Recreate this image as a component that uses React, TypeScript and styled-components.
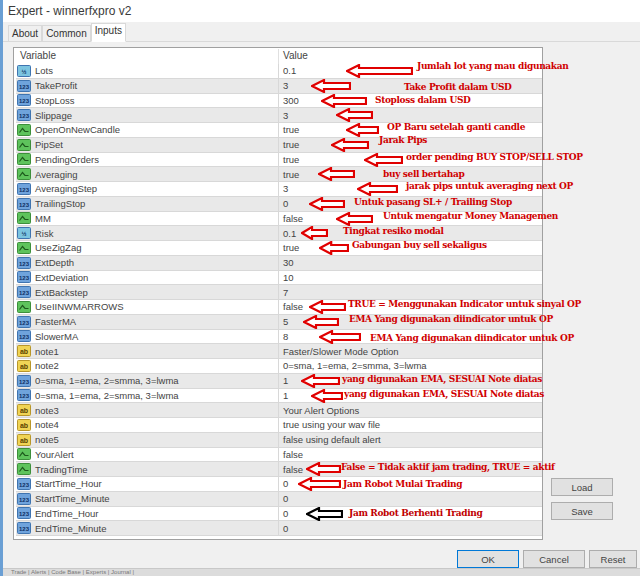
import React from 'react';
import styled, { createGlobalStyle } from 'styled-components';

const GlobalStyle = createGlobalStyle`
  html, body { margin: 0; padding: 0; background: #f0f0f0; }
  body { font-family: "Liberation Sans", Arial, sans-serif; }
`;

const ROW_H = 14.75;

type Kind = 'int' | 'dbl' | 'bool' | 'str';

const rows: [Kind, string, string][] = [
  ['dbl', 'Lots', '0.1'],
  ['int', 'TakeProfit', '3'],
  ['int', 'StopLoss', '300'],
  ['int', 'Slippage', '3'],
  ['bool', 'OpenOnNewCandle', 'true'],
  ['bool', 'PipSet', 'true'],
  ['bool', 'PendingOrders', 'true'],
  ['bool', 'Averaging', 'true'],
  ['int', 'AveragingStep', '3'],
  ['int', 'TrailingStop', '0'],
  ['bool', 'MM', 'false'],
  ['dbl', 'Risk', '0.1'],
  ['bool', 'UseZigZag', 'true'],
  ['int', 'ExtDepth', '30'],
  ['int', 'ExtDeviation', '10'],
  ['int', 'ExtBackstep', '7'],
  ['bool', 'UseIINWMARROWS', 'false'],
  ['int', 'FasterMA', '5'],
  ['int', 'SlowerMA', '8'],
  ['str', 'note1', 'Faster/Slower Mode Option'],
  ['str', 'note2', '0=sma, 1=ema, 2=smma, 3=lwma'],
  ['int', '0=sma, 1=ema, 2=smma, 3=lwma', '1'],
  ['int', '0=sma, 1=ema, 2=smma, 3=lwma', '1'],
  ['str', 'note3', 'Your Alert Options'],
  ['str', 'note4', 'true using your wav file'],
  ['str', 'note5', 'false using default alert'],
  ['bool', 'YourAlert', 'false'],
  ['bool', 'TradingTime', 'false'],
  ['int', 'StartTime_Hour', '0'],
  ['int', 'StartTime_Minute', '0'],
  ['int', 'EndTime_Hour', '0'],
  ['int', 'EndTime_Minute', '0'],
];

// row index, arrow left, arrow right, text left, text dy, text, colour
const notes: [number, number, number, number, number, string, string?][] = [
  [0, 345, 410, 416, -3, 'Jumlah lot yang mau digunakan'],
  [1, 310, 348, 403, 3, 'Take Profit dalam USD'],
  [2, 320, 364, 374, 1, 'Stoploss dalam USD'],
  [3, 335, 370, 0, 0, ''],
  [4, 345, 376, 386, -1, 'OP Baru setelah ganti candle'],
  [5, 330, 366, 378, -3, 'Jarak Pips'],
  [6, 363, 400, 405, -1, 'order pending BUY STOP/SELL STOP'],
  [7, 317, 352, 382, 2, 'buy sell bertahap'],
  [8, 356, 395, 405, -1, 'jarak pips untuk averaging next OP'],
  [9, 308, 342, 353, 0, 'Untuk pasang SL+ / Trailing Stop'],
  [10, 335, 370, 382, -1, 'Untuk mengatur Money Managemen'],
  [11, 300, 325, 342, 0, 'Tingkat resiko modal'],
  [12, 318, 346, 351, -1, 'Gabungan buy sell sekaligus'],
  [16, 308, 343, 347, -1, 'TRUE = Menggunakan Indicator untuk sinyal OP'],
  [17, 302, 336, 348, -1, 'EMA Yang digunakan diindicator untuk OP'],
  [18, 318, 358, 369, 3, 'EMA Yang digunakan diindicator untuk OP'],
  [21, 300, 337, 341, 0, 'yang digunakan EMA, SESUAI Note diatas'],
  [22, 310, 340, 343, 0, 'yang digunakan EMA, SESUAI Note diatas'],
  [27, 305, 338, 340, 0, 'False = Tidak aktif jam trading, TRUE = aktif'],
  [28, 297, 338, 342, 2, 'Jam Robot Mulai Trading'],
  [30, 305, 340, 348, 1, 'Jam Robot Berhenti Trading', '#000'],
];

const Window = styled.div`
  width: 640px;
  height: 576px;
  position: relative;
  overflow: hidden;
  background: #f0f0f0;
  border-left: 3px solid #6a9fd4;
  box-sizing: border-box;
  display: flex;
  flex-direction: column;
`;

const TitleBar = styled.div`
  height: 22px;
  background: #fff;
  display: flex;
  align-items: center;
  padding-left: 5px;
  font-size: 12px;
  color: #3a3a3a;
`;

const Tabs = styled.div`
  display: flex;
  align-items: flex-end;
  height: 19px;
  padding: 0 0 0 5px;
  border-bottom: 1px solid #d9d9d9;
`;

const Tab = styled.div<{ $active?: boolean }>`
  font-size: 10px;
  color: #333;
  height: ${p => (p.$active ? 17 : 15)}px;
  line-height: ${p => (p.$active ? 14 : 15)}px;
  padding: 0 3px;
  border: 1px solid #d9d9d9;
  border-bottom: ${p => (p.$active ? '1px solid #fff' : 'none')};
  background: ${p => (p.$active ? '#fff' : '#f0f0f0')};
  margin-bottom: ${p => (p.$active ? -1 : 0)}px;
`;

const Body = styled.div`
  display: flex;
  gap: 5px;
  padding: 5px 0 0 10px;
  height: 495px;
`;

const Table = styled.div`
  position: relative;
  width: 530px;
  height: 493px;
  border: 1px solid #a0a0a0;
  background: #fff;
  box-sizing: border-box;
  padding: 1px 0 0 2px;
`;

const Grid = styled.div`
  display: grid;
  grid-template-columns: 262px 1fr;
`;

const HeadCell = styled.div<{ $right?: boolean }>`
  height: 15px;
  line-height: 14px;
  font-size: 10px;
  color: #444;
  padding-left: 4px;
  border-left: ${p => (p.$right ? '1px solid #e0e0e0' : 'none')};
`;

const Cell = styled.div<{ $odd: boolean; $right?: boolean }>`
  height: ${ROW_H}px;
  box-sizing: border-box;
  display: flex;
  align-items: center;
  gap: 4px;
  font-size: 9.5px;
  color: #444;
  padding-left: ${p => (p.$right ? 4 : 1)}px;
  background: ${p => (p.$odd ? '#e9e9e9' : '#fff')};
  border-bottom: 1px solid #d8d8d8;
  border-left: ${p => (p.$right ? '1px solid #d8d8d8' : 'none')};
  white-space: nowrap;
`;

const Side = styled.div`
  display: flex;
  flex-direction: column;
  justify-content: flex-end;
  gap: 6px;
  padding: 0 0 22px 3px;
`;

const Button = styled.button<{ $primary?: boolean; $w?: number }>`
  width: ${p => p.$w ?? 62}px;
  height: 18px;
  font-family: "Liberation Sans", Arial, sans-serif;
  font-size: 9.5px;
  color: #444;
  background: #e1e1e1;
  border: 1px solid ${p => (p.$primary ? '#0078d7' : '#adadad')};
  padding: 0;
`;

const Footer = styled.div`
  display: flex;
  justify-content: flex-end;
  gap: 4px;
  padding: 8px 3px 0 0;
`;

const Terminal = styled.div`
  position: absolute;
  left: 0;
  right: 0;
  bottom: 0;
  height: 7px;
  background: #dcdcdc;
  border-top: 1px solid #c8c8c8;
  font-size: 6px;
  color: #777;
  line-height: 7px;
  overflow: hidden;
  padding-left: 8px;
`;

const Note = styled.div`
  position: absolute;
  left: 0;
  height: ${ROW_H}px;
  pointer-events: none;
`;

const NoteText = styled.span<{ $color: string }>`
  position: absolute;
  top: -1px;
  white-space: nowrap;
  font-family: "DejaVu Serif Condensed", "DejaVu Serif", serif;
  font-weight: bold;
  font-size: 10px;
  color: ${p => p.$color};
  letter-spacing: -0.35px;
`;

const Icon = ({ kind }: { kind: Kind }) => {
  const fill = kind === 'int' ? '#6fa3dc' : kind === 'dbl' ? '#7cc4e0' : kind === 'bool' ? '#5ec35c' : '#f0d455';
  const stroke = kind === 'str' ? '#b8962a' : kind === 'bool' ? '#3d8f3b' : '#3f74b0';
  return (
    <svg width="14" height="12" viewBox="0 0 14 12">
      <rect x="0.5" y="0.5" width="13" height="11" rx="1" fill={fill} stroke={stroke} />
      {kind === 'bool' ? (
        <path d="M2.5 8.5 L5.5 4.5 L8 7.5 L11.5 7.5" fill="none" stroke="#1d5a1c" strokeWidth="1.2" />
      ) : (
        <text x="7" y="8.6" textAnchor="middle" fontSize={kind === 'str' ? 7 : 6} fontWeight="bold"
          fontFamily="Liberation Sans, sans-serif" fill={kind === 'str' ? '#5a4200' : '#0d2f63'}>
          {kind === 'int' ? '123' : kind === 'dbl' ? '½' : 'ab'}
        </text>
      )}
    </svg>
  );
};

const Arrow = ({ left, right, color }: { left: number; right: number; color: string }) => {
  const w = right - left;
  const head = Math.min(12, w / 2.5);
  return (
    <svg width={w + 2} height="14" viewBox={`-1 0 ${w + 2} 14`}
      style={{ position: 'absolute', left: left - 13, top: 0 }}>
      <path d={`M0 7 L${head} 1 L${head} 4 L${w} 4 L${w} 10 L${head} 10 L${head} 13 Z`}
        fill="#fff" stroke={color} strokeWidth="2.2" strokeLinejoin="miter" />
    </svg>
  );
};

export default function App() {
  return (
    <>
      <GlobalStyle />
      <Window>
        <TitleBar>Expert - winnerfxpro v2</TitleBar>
        <Tabs>
          <Tab>About</Tab>
          <Tab>Common</Tab>
          <Tab $active>Inputs</Tab>
        </Tabs>
        <Body>
          <Table>
            <Grid>
              <HeadCell>Variable</HeadCell>
              <HeadCell $right>Value</HeadCell>
              {rows.map(([kind, name, value], i) => (
                <React.Fragment key={i}>
                  <Cell $odd={i % 2 === 1}>
                    <Icon kind={kind} />
                    {name}
                  </Cell>
                  <Cell $odd={i % 2 === 1} $right>{value}</Cell>
                </React.Fragment>
              ))}
            </Grid>
            {notes.map(([row, al, ar, tx, dy, text, color], i) => (
              <Note key={i} style={{ top: 16 + row * ROW_H }}>
                <Arrow left={al} right={ar} color={color || '#e00000'} />
                {text && (
                  <NoteText $color={color ? '#c00000' : '#d00000'} style={{ left: tx - 13, top: dy - 1 }}>
                    {text}
                  </NoteText>
                )}
              </Note>
            ))}
          </Table>
          <Side>
            <Button>Load</Button>
            <Button>Save</Button>
          </Side>
        </Body>
        <Footer>
          <Button $primary>OK</Button>
          <Button>Cancel</Button>
          <Button $w={48}>Reset</Button>
        </Footer>
        <Terminal>Trade | Alerts | Code Base | Experts | Journal |</Terminal>
      </Window>
    </>
  );
}
